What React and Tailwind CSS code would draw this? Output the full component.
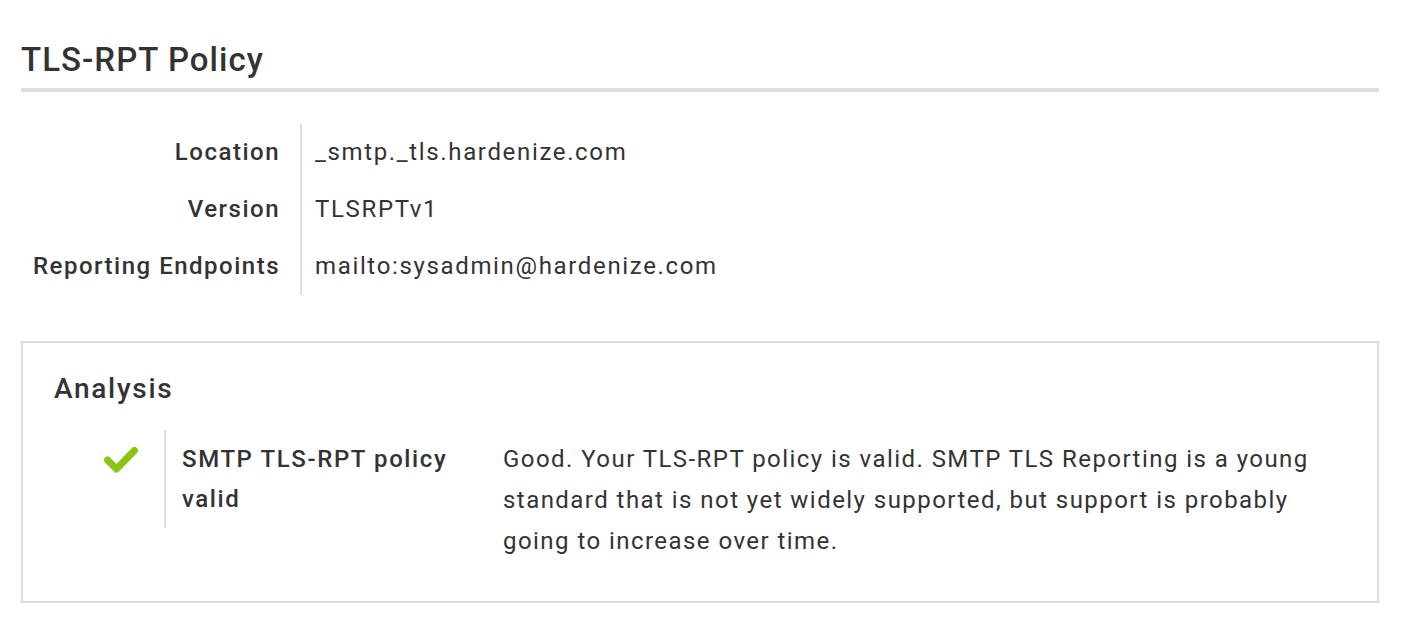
const ROWS = [
  { label: 'Location', value: '_smtp._tls.hardenize.com' },
  { label: 'Version', value: 'TLSRPTv1' },
  { label: 'Reporting Endpoints', value: 'mailto:sysadmin@hardenize.com' },
]

function Check() {
  return (
    <svg width="36" height="29" viewBox="0 0 36 29" aria-hidden="true">
      <path
        d="M4.5 15 L13.5 24 L31.5 5.5"
        fill="none"
        stroke="#8cc414"
        strokeWidth="7"
        strokeLinecap="round"
        strokeLinejoin="round"
      />
    </svg>
  )
}

export default function App() {
  return (
    <div className="min-h-screen bg-white font-['Roboto','Liberation_Sans',sans-serif] text-[#333]">
      <div className="ml-[21px] w-[1358px] pt-[38px]">
        {/* Heading */}
        <h2 className="border-b-4 border-[#ddd] pb-[6px] text-[33px] font-medium leading-[44px] tracking-[1.05px]">
          TLS-RPT Policy
        </h2>

        {/* Policy table */}
        <div className="mt-[32px] flex flex-col">
          {ROWS.map(({ label, value }) => (
            <div key={label} className="flex text-[24px] leading-[57px]">
              <div className="w-[281px] shrink-0 border-r-2 border-[#ddd] pr-[20px] text-right font-medium tracking-[1.5px]">
                {label}
              </div>
              <div className="pl-[13px] tracking-[1.65px]">{value}</div>
            </div>
          ))}
        </div>

        {/* Analysis box */}
        <div className="mt-[46px] border-2 border-[#ddd] pb-[39px] pl-[31px] pr-[32px] pt-[26px]">
          <h3 className="text-[28px] font-medium leading-[40px] tracking-[1.7px]">Analysis</h3>
          <div className="mt-[21px] flex items-start">
            <div className="flex w-[110px] shrink-0 justify-end pr-[25px] pt-[15px]">
              <Check />
            </div>
            <div className="w-[339px] shrink-0 border-l-2 border-[#ddd] py-[9px] pl-[16px] pr-[30px] text-[24px] font-medium leading-[40px] tracking-[1.6px]">
              SMTP TLS-RPT policy valid
            </div>
            <div className="w-[825px] pt-[9px] text-[24px] leading-[41px] tracking-[1.45px]">
              Good. Your TLS-RPT policy is valid. SMTP TLS Reporting is a young standard that is not yet
              widely supported, but support is probably going to increase over time.
            </div>
          </div>
        </div>
      </div>
    </div>
  )
}
